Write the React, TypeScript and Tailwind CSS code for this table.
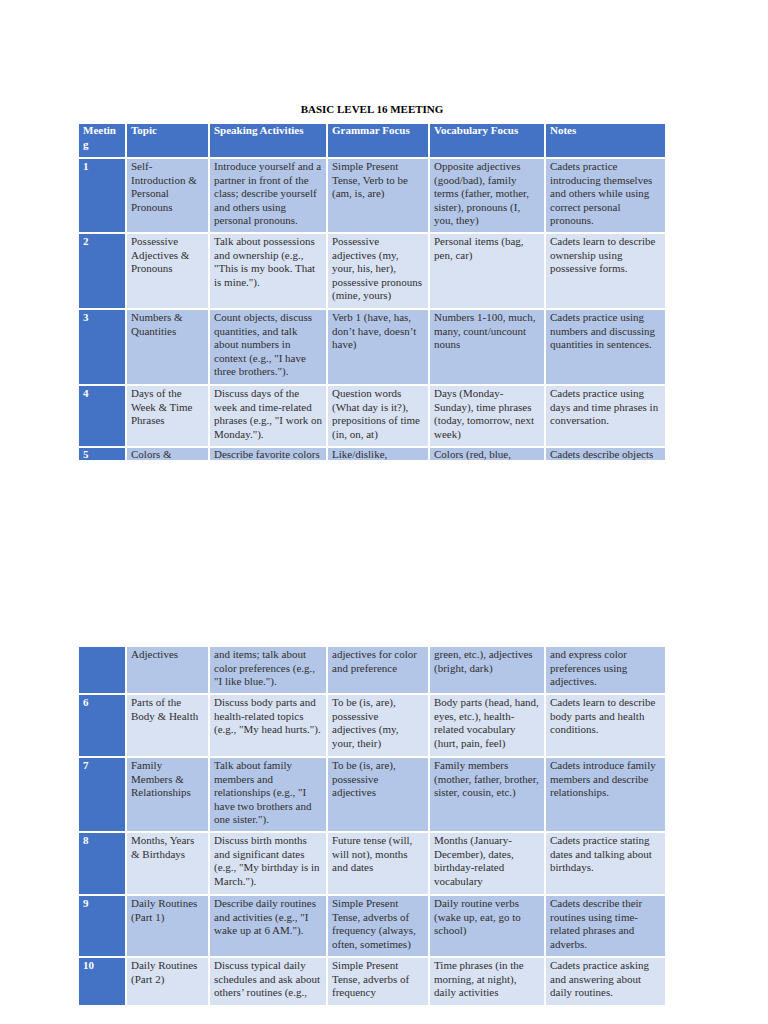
import React from 'react';

type Row = {
  num: string;
  height: string;
  tone: 'mid' | 'light';
  tight?: boolean;
  cells: string[][];
};

const gridCols = 'grid grid-cols-[46px_81px_116px_100px_114px_119px] gap-x-[2px]';

const header = ['Topic', 'Speaking Activities', 'Grammar Focus', 'Vocabulary Focus', 'Notes'];

const pageOne: Row[] = [
  {
    num: '1',
    height: 'h-[73px]',
    tone: 'mid',
    cells: [
      ['Self-', 'Introduction &', 'Personal', 'Pronouns'],
      ['Introduce yourself and a', 'partner in front of the', 'class; describe yourself', 'and others using', 'personal pronouns.'],
      ['Simple Present', 'Tense, Verb to be', '(am, is, are)'],
      ['Opposite adjectives', '(good/bad), family', 'terms (father, mother,', 'sister), pronouns (I,', 'you, they)'],
      ['Cadets practice', 'introducing themselves', 'and others while using', 'correct personal', 'pronouns.'],
    ],
  },
  {
    num: '2',
    height: 'h-[74px]',
    tone: 'light',
    cells: [
      ['Possessive', 'Adjectives &', 'Pronouns'],
      ['Talk about possessions', 'and ownership (e.g.,', '"This is my book. That', 'is mine.").'],
      ['Possessive', 'adjectives (my,', 'your, his, her),', 'possessive pronouns', '(mine, yours)'],
      ['Personal items (bag,', 'pen, car)'],
      ['Cadets learn to describe', 'ownership using', 'possessive forms.'],
    ],
  },
  {
    num: '3',
    height: 'h-[74px]',
    tone: 'mid',
    cells: [
      ['Numbers &', 'Quantities'],
      ['Count objects, discuss', 'quantities, and talk', 'about numbers in', 'context (e.g., "I have', 'three brothers.").'],
      ['Verb 1 (have, has,', 'don\u2019t have, doesn\u2019t', 'have)'],
      ['Numbers 1-100, much,', 'many, count/uncount', 'nouns'],
      ['Cadets practice using', 'numbers and discussing', 'quantities in sentences.'],
    ],
  },
  {
    num: '4',
    height: 'h-[60px]',
    tone: 'light',
    cells: [
      ['Days of the', 'Week & Time', 'Phrases'],
      ['Discuss days of the', 'week and time-related', 'phrases (e.g., "I work on', 'Monday.").'],
      ['Question words', '(What day is it?),', 'prepositions of time', '(in, on, at)'],
      ['Days (Monday-', 'Sunday), time phrases', '(today, tomorrow, next', 'week)'],
      ['Cadets practice using', 'days and time phrases in', 'conversation.'],
    ],
  },
  {
    // row 5 breaks across the page: only its first line sits here
    num: '5',
    height: 'h-[12px]',
    tone: 'mid',
    tight: true,
    cells: [
      ['Colors &'],
      ['Describe favorite colors'],
      ['Like/dislike,'],
      ['Colors (red, blue,'],
      ['Cadets describe objects'],
    ],
  },
];

const pageTwo: Row[] = [
  {
    num: '',
    height: 'h-[46px]',
    tone: 'mid',
    cells: [
      ['Adjectives'],
      ['and items; talk about', 'color preferences (e.g.,', '"I like blue.").'],
      ['adjectives for color', 'and preference'],
      ['green, etc.), adjectives', '(bright, dark)'],
      ['and express color', 'preferences using', 'adjectives.'],
    ],
  },
  {
    num: '6',
    height: 'h-[61px]',
    tone: 'light',
    cells: [
      ['Parts of the', 'Body & Health'],
      ['Discuss body parts and', 'health-related topics', '(e.g., "My head hurts.").'],
      ['To be (is, are),', 'possessive', 'adjectives (my,', 'your, their)'],
      ['Body parts (head, hand,', 'eyes, etc.), health-', 'related vocabulary', '(hurt, pain, feel)'],
      ['Cadets learn to describe', 'body parts and health', 'conditions.'],
    ],
  },
  {
    num: '7',
    height: 'h-[73px]',
    tone: 'mid',
    cells: [
      ['Family', 'Members &', 'Relationships'],
      ['Talk about family', 'members and', 'relationships (e.g., "I', 'have two brothers and', 'one sister.").'],
      ['To be (is, are),', 'possessive', 'adjectives'],
      ['Family members', '(mother, father, brother,', 'sister, cousin, etc.)'],
      ['Cadets introduce family', 'members and describe', 'relationships.'],
    ],
  },
  {
    num: '8',
    height: 'h-[61px]',
    tone: 'light',
    cells: [
      ['Months, Years', '& Birthdays'],
      ['Discuss birth months', 'and significant dates', '(e.g., "My birthday is in', 'March.").'],
      ['Future tense (will,', 'will not), months', 'and dates'],
      ['Months (January-', 'December), dates,', 'birthday-related', 'vocabulary'],
      ['Cadets practice stating', 'dates and talking about', 'birthdays.'],
    ],
  },
  {
    num: '9',
    height: 'h-[60px]',
    tone: 'mid',
    cells: [
      ['Daily Routines', '(Part 1)'],
      ['Describe daily routines', 'and activities (e.g., "I', 'wake up at 6 AM.").'],
      ['Simple Present', 'Tense, adverbs of', 'frequency (always,', 'often, sometimes)'],
      ['Daily routine verbs', '(wake up, eat, go to', 'school)'],
      ['Cadets describe their', 'routines using time-', 'related phrases and', 'adverbs.'],
    ],
  },
  {
    num: '10',
    height: 'h-[47px]',
    tone: 'light',
    cells: [
      ['Daily Routines', '(Part 2)'],
      ['Discuss typical daily', 'schedules and ask about', 'others\u2019 routines (e.g.,'],
      ['Simple Present', 'Tense, adverbs of', 'frequency'],
      ['Time phrases (in the', 'morning, at night),', 'daily activities'],
      ['Cadets practice asking', 'and answering about', 'daily routines.'],
    ],
  },
];

function Lines({ lines }: { lines: string[] }) {
  return (
    <>
      {lines.map((line, i) => (
        <div key={i} className="whitespace-nowrap">
          {line}
        </div>
      ))}
    </>
  );
}

function BodyRow({ row }: { row: Row }) {
  const tone = row.tone === 'mid' ? 'bg-[#b4c6e7]' : 'bg-[#d9e2f3]';
  const pad = row.tight ? 'leading-[12px]' : 'pt-[1px]';
  return (
    <div className={`${gridCols} ${row.height} overflow-hidden`}>
      <div className={`bg-[#4472c4] pl-[4px] ${pad} font-bold text-white`}>{row.num}</div>
      {row.cells.map((lines, i) => (
        <div key={i} className={`${tone} pl-[4px] ${pad} text-[#2f2f2f]`}>
          <Lines lines={lines} />
        </div>
      ))}
    </div>
  );
}

function HeaderRow() {
  return (
    <div className={`${gridCols} h-[33px] font-bold text-white`}>
      <div className="bg-[#4472c4] pl-[4px]">
        <div>Meetin</div>
        <div>g</div>
      </div>
      {header.map((h) => (
        <div key={h} className="bg-[#4472c4] pl-[4px] whitespace-nowrap">
          {h}
        </div>
      ))}
    </div>
  );
}

export default function App() {
  return (
    <div className="min-h-[1024px] w-[768px] bg-white font-['Liberation_Serif',serif] text-[11px] leading-[13.4px]">
      <div className="ml-[79px] w-[586px] pt-[103px]">
        <h1 className="text-center text-[11px] font-bold text-black">BASIC LEVEL 16 MEETING</h1>
      </div>

      <div className="ml-[79px] mt-[8px] flex w-[586px] flex-col gap-y-[2px]">
        <HeaderRow />
        {pageOne.map((row) => (
          <BodyRow key={row.num} row={row} />
        ))}
      </div>

      <div className="ml-[79px] mt-[187px] flex w-[586px] flex-col gap-y-[2px]">
        {pageTwo.map((row, i) => (
          <BodyRow key={i} row={row} />
        ))}
      </div>
    </div>
  );
}
